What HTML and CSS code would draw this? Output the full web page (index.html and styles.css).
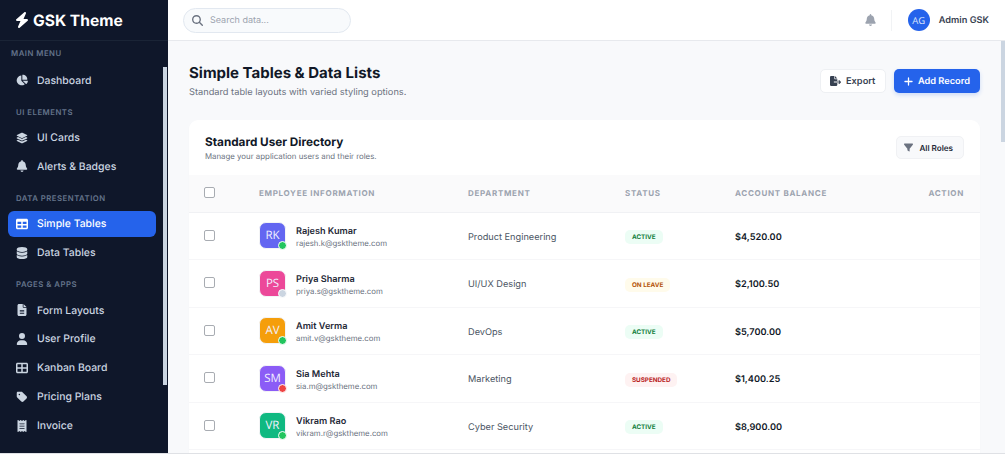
FILE: index.html
```html
<!DOCTYPE html>
<html lang="en">
<head>
<meta charset="utf-8">
<title>GSK Theme</title>
<link rel="stylesheet" href="styles.css">
</head>
<body>
<svg class="sprite" aria-hidden="true">
<symbol id="i-bolt" viewBox="0 0 448 512"><path d="M349.4 44.6c5.9-13.7 1.5-29.7-10.6-38.5s-28.6-8.1-39.9 1.8l-256 224c-10 8.8-13.6 22.9-8.9 35.3S50.7 288 64 288H175.5L98.6 467.4c-5.9 13.7-1.5 29.7 10.6 38.5s28.6 8.1 39.9-1.8l256-224c10-8.8 13.6-22.9 8.9-35.3s-16.6-20.7-30-20.7H272.5L349.4 44.6z"/></symbol>
<symbol id="i-bell" viewBox="0 0 448 512"><path d="M224 0c-17.7 0-32 14.3-32 32V51.2C119 66 64 130.6 64 208v18.8c0 47-17.3 92.4-48.5 127.6l-7.4 8.3c-8.4 9.4-10.4 22.9-5.3 34.4S19.4 416 32 416H416c12.6 0 24-7.4 29.2-18.9s3.1-25-5.3-34.4l-7.4-8.3C401.3 319.2 384 273.9 384 226.8V208c0-77.4-55-142-128-156.8V32c0-17.7-14.3-32-32-32zm45.3 493.3c12-12 18.7-28.3 18.7-45.3H224 160c0 17 6.7 33.3 18.7 45.3s28.3 18.7 45.3 18.7s33.3-6.7 45.3-18.7z"/></symbol>
<symbol id="i-search" viewBox="0 0 512 512"><path d="M416 208c0 45.9-14.9 88.3-40 122.7L502.6 457.4c12.5 12.5 12.5 32.8 0 45.3s-32.8 12.5-45.3 0L330.7 376c-34.4 25.2-76.8 40-122.7 40C93.1 416 0 322.9 0 208S93.1 0 208 0S416 93.1 416 208zM208 352a144 144 0 1 0 0-288 144 144 0 1 0 0 288z"/></symbol>
<symbol id="i-user" viewBox="0 0 448 512"><path d="M224 256A128 128 0 1 0 224 0a128 128 0 1 0 0 256zm-45.7 48C79.8 304 0 383.8 0 482.3C0 498.7 13.3 512 29.7 512H418.3c16.4 0 29.7-13.3 29.7-29.7C448 383.8 368.2 304 269.7 304H178.3z"/></symbol>
<symbol id="i-plus" viewBox="0 0 448 512"><path d="M256 80c0-17.7-14.3-32-32-32s-32 14.3-32 32V224H48c-17.7 0-32 14.3-32 32s14.3 32 32 32H192V432c0 17.7 14.3 32 32 32s32-14.3 32-32V288H400c17.7 0 32-14.3 32-32s-14.3-32-32-32H256V80z"/></symbol>
<symbol id="i-filter" viewBox="0 0 512 512"><path d="M3.9 54.9C10.5 40.9 24.5 32 40 32H472c15.5 0 29.5 8.9 36.1 22.9s4.6 30.5-5.2 42.5L320 320.9V448c0 12.1-6.8 23.2-17.7 28.6s-23.8 4.3-33.5-3l-64-48c-8.1-6-12.8-15.5-12.8-25.6V320.9L9 97.3C-.7 85.4-2.8 68.8 3.9 54.9z"/></symbol>
<symbol id="i-tag" viewBox="0 0 448 512"><path d="M0 80V229.5c0 17 6.7 33.3 18.7 45.3l176 176c25 25 65.5 25 90.5 0L418.7 317.3c25-25 25-65.5 0-90.5l-176-176c-12-12-28.3-18.7-45.3-18.7H48C21.5 32 0 53.5 0 80zm112 32a32 32 0 1 1 0 64 32 32 0 1 1 0-64z"/></symbol>
<symbol id="i-db" viewBox="0 0 448 512"><path d="M448 80v48c0 44.2-100.3 80-224 80S0 172.2 0 128V80C0 35.8 100.3 0 224 0S448 35.8 448 80zM393.2 214.7c20.8-7.4 39.9-16.9 54.8-28.6V288c0 44.2-100.3 80-224 80S0 332.2 0 288V186.1c14.9 11.8 34 21.2 54.8 28.6C99.7 230.7 159.5 240 224 240s124.3-9.3 169.2-25.3zM0 346.1c14.9 11.8 34 21.2 54.8 28.6C99.7 390.7 159.5 400 224 400s124.3-9.3 169.2-25.3c20.8-7.4 39.9-16.9 54.8-28.6V432c0 44.2-100.3 80-224 80S0 476.2 0 432V346.1z"/></symbol>
<symbol id="i-layers" viewBox="0 0 576 512"><path d="M264.5 5.2c14.9-6.9 32.1-6.9 47 0l218.6 101c8.5 3.9 13.9 12.4 13.9 21.8s-5.4 17.9-13.9 21.8l-218.6 101c-14.9 6.9-32.1 6.9-47 0L45.9 149.8C37.4 145.8 32 137.3 32 128s5.4-17.9 13.9-21.8L264.5 5.2zM476.9 209.6l53.2 24.6c8.5 3.9 13.9 12.4 13.9 21.8s-5.4 17.9-13.9 21.8l-218.6 101c-14.9 6.9-32.1 6.9-47 0L45.9 277.8C37.4 273.8 32 265.3 32 256s5.4-17.9 13.9-21.8l53.2-24.6 152 70.2c23.4 10.8 50.4 10.8 73.8 0l152-70.2zm-152 198.2l152-70.2 53.2 24.6c8.5 3.9 13.9 12.4 13.9 21.8s-5.4 17.9-13.9 21.8l-218.6 101c-14.9 6.9-32.1 6.9-47 0L45.9 405.8C37.4 401.8 32 393.3 32 384s5.4-17.9 13.9-21.8l53.2-24.6 152 70.2c23.4 10.8 50.4 10.8 73.8 0z"/></symbol>
<symbol id="i-table" viewBox="0 0 512 512"><path d="M64 256V160H224v96H64zm0 64H224v96H64V320zm224 96V320H448v96H288zM448 256H288V160H448v96zM64 32C28.7 32 0 60.7 0 96V416c0 35.3 28.7 64 64 64H448c35.3 0 64-28.7 64-64V96c0-35.3-28.7-64-64-64H64z"/></symbol>
<symbol id="i-grid" viewBox="0 0 512 512"><path d="M448 96V224H288V96H448zm0 192V416H288V288H448zM224 224H64V96H224V224zM64 288H224V416H64V288zM64 32C28.7 32 0 60.7 0 96V416c0 35.3 28.7 64 64 64H448c35.3 0 64-28.7 64-64V96c0-35.3-28.7-64-64-64H64z"/></symbol>
<symbol id="i-file" viewBox="0 0 384 512"><path d="M64 0C28.7 0 0 28.7 0 64V448c0 35.3 28.7 64 64 64H320c35.3 0 64-28.7 64-64V160H256c-17.7 0-32-14.3-32-32V0H64zM256 0V128H384L256 0zM112 256H272c8.8 0 16 7.2 16 16s-7.2 16-16 16H112c-8.8 0-16-7.2-16-16s7.2-16 16-16zm0 64H272c8.8 0 16 7.2 16 16s-7.2 16-16 16H112c-8.8 0-16-7.2-16-16s7.2-16 16-16zm0 64H272c8.8 0 16 7.2 16 16s-7.2 16-16 16H112c-8.8 0-16-7.2-16-16s7.2-16 16-16z"/></symbol>
<symbol id="i-pie" viewBox="0 0 576 512"><path d="M304 240V16.6c0-9 7-16.6 16-16.6C443.7 0 544 100.3 544 224c0 9-7.6 16-16.6 16H304zM32 272C32 150.7 122.1 50.3 239 34.3c9.2-1.3 17 6.1 17 15.4V288L412.5 444.5c6.7 6.7 6.2 17.7-1.5 23.1C371.8 495.6 323.8 512 272 512C139.5 512 32 404.6 32 272zm526.4 16c9.3 0 16.6 7.8 15.4 17c-7.7 55.9-34.6 105.6-73.9 142.3c-6 5.6-15.4 5.2-21.2-.7L320 288H558.4z"/></symbol>
<symbol id="i-export" viewBox="0 0 576 512"><path d="M0 64C0 28.7 28.7 0 64 0H224V128c0 17.7 14.3 32 32 32H384V288H216c-13.3 0-24 10.7-24 24s10.7 24 24 24H384V448c0 35.3-28.7 64-64 64H64c-35.3 0-64-28.7-64-64V64zM384 336V288H494.1l-39-39c-9.4-9.4-9.4-24.6 0-33.9s24.6-9.4 33.9 0l80 80c9.4 9.4 9.4 24.6 0 33.9l-80 80c-9.4 9.4-24.6 9.4-33.9 0s-9.4-24.6 0-33.9l39-39H384zm0-208H256V0L384 128z"/></symbol>
<symbol id="i-receipt" viewBox="0 0 384 512"><path d="M14 2.2C22.5-1.7 32.5-.3 39.6 5.8L80 40.4 120.4 5.8c9-7.7 22.3-7.7 31.2 0L192 40.4 232.4 5.8c9-7.7 22.2-7.7 31.2 0L304 40.4 344.4 5.8c7.1-6.1 17.1-7.5 25.6-3.6s14 12.4 14 21.8V488c0 9.4-5.5 17.9-14 21.8s-18.5 2.5-25.6-3.6L304 471.6l-40.4 34.6c-9 7.7-22.3 7.7-31.2 0L192 471.6l-40.4 34.6c-9 7.7-22.3 7.7-31.2 0L80 471.6 39.6 506.2c-7.1 6.1-17.1 7.5-25.6 3.6S0 497.4 0 488V24C0 14.6 5.5 6.1 14 2.2zM96 144c-8.8 0-16 7.2-16 16s7.2 16 16 16H288c8.8 0 16-7.2 16-16s-7.2-16-16-16H96zM80 352c0 8.8 7.2 16 16 16H288c8.8 0 16-7.2 16-16s-7.2-16-16-16H96c-8.8 0-16 7.2-16 16zM96 240c-8.8 0-16 7.2-16 16s7.2 16 16 16H288c8.8 0 16-7.2 16-16s-7.2-16-16-16H96z"/></symbol>
</svg>
<div class="app">
  <aside class="sidebar">
    <div class="brand"><svg class="brand-icon"><use href="#i-bolt"/></svg><span>GSK Theme</span></div>
    <nav class="nav">
      <div class="nav-label nav-label-first">MAIN MENU</div>
      <a class="nav-item"><svg class="nav-icon"><use href="#i-pie"/></svg>Dashboard</a>
      <div class="nav-label">UI ELEMENTS</div>
      <a class="nav-item"><svg class="nav-icon"><use href="#i-layers"/></svg>UI Cards</a>
      <a class="nav-item"><svg class="nav-icon"><use href="#i-bell"/></svg>Alerts &amp; Badges</a>
      <div class="nav-label">DATA PRESENTATION</div>
      <a class="nav-item nav-item-active"><svg class="nav-icon"><use href="#i-table"/></svg>Simple Tables</a>
      <a class="nav-item"><svg class="nav-icon"><use href="#i-db"/></svg>Data Tables</a>
      <div class="nav-label">PAGES &amp; APPS</div>
      <a class="nav-item"><svg class="nav-icon"><use href="#i-file"/></svg>Form Layouts</a>
      <a class="nav-item"><svg class="nav-icon"><use href="#i-user"/></svg>User Profile</a>
      <a class="nav-item"><svg class="nav-icon"><use href="#i-grid"/></svg>Kanban Board</a>
      <a class="nav-item"><svg class="nav-icon"><use href="#i-tag"/></svg>Pricing Plans</a>
      <a class="nav-item"><svg class="nav-icon"><use href="#i-receipt"/></svg>Invoice</a>
    </nav>
    <div class="side-thumb"></div>
  </aside>
  <div class="main">
    <header class="topbar">
      <div class="search"><svg class="search-icon"><use href="#i-search"/></svg><span>Search data...</span></div>
      <div class="top-right">
        <svg class="top-bell"><use href="#i-bell"/></svg>
        <div class="top-sep"></div>
        <div class="top-avatar">AG</div>
        <div class="top-name">Admin GSK</div>
      </div>
    </header>
    <main class="content">
      <div class="page-head">
        <div>
          <h1 class="page-title">Simple Tables &amp; Data Lists</h1>
          <p class="page-sub">Standard table layouts with varied styling options.</p>
        </div>
        <div class="page-actions">
          <button class="btn btn-light"><svg class="btn-icon btn-icon-export"><use href="#i-export"/></svg>Export</button>
          <button class="btn btn-primary"><svg class="btn-icon"><use href="#i-plus"/></svg>Add Record</button>
        </div>
      </div>
      <section class="card">
        <div class="card-head">
          <div>
            <h2 class="card-title">Standard User Directory</h2>
            <p class="card-sub">Manage your application users and their roles.</p>
          </div>
          <button class="filter"><svg class="filter-icon"><use href="#i-filter"/></svg>All Roles</button>
        </div>
        <table class="table">
          <thead>
            <tr>
              <th class="col-check"><span class="check"></span></th>
              <th class="col-emp">EMPLOYEE INFORMATION</th>
              <th class="col-dept">DEPARTMENT</th>
              <th class="col-status">STATUS</th>
              <th class="col-bal">ACCOUNT BALANCE</th>
              <th class="col-act">ACTION</th>
            </tr>
          </thead>
          <tbody>
            <tr>
              <td><span class="check"></span></td>
              <td><div class="emp"><div class="avatar av-indigo">RK<i class="dot dot-green"></i></div><div><div class="emp-name">Rajesh Kumar</div><div class="emp-mail">rajesh.k@gsktheme.com</div></div></div></td>
              <td class="dept">Product Engineering</td>
              <td><span class="pill pill-green">ACTIVE</span></td>
              <td class="bal">$4,520.00</td>
              <td></td>
            </tr>
            <tr>
              <td><span class="check"></span></td>
              <td><div class="emp"><div class="avatar av-pink">PS<i class="dot dot-grey"></i></div><div><div class="emp-name">Priya Sharma</div><div class="emp-mail">priya.s@gsktheme.com</div></div></div></td>
              <td class="dept">UI/UX Design</td>
              <td><span class="pill pill-amber">ON LEAVE</span></td>
              <td class="bal">$2,100.50</td>
              <td></td>
            </tr>
            <tr>
              <td><span class="check"></span></td>
              <td><div class="emp"><div class="avatar av-amber">AV<i class="dot dot-green"></i></div><div><div class="emp-name">Amit Verma</div><div class="emp-mail">amit.v@gsktheme.com</div></div></div></td>
              <td class="dept">DevOps</td>
              <td><span class="pill pill-green">ACTIVE</span></td>
              <td class="bal">$5,700.00</td>
              <td></td>
            </tr>
            <tr>
              <td><span class="check"></span></td>
              <td><div class="emp"><div class="avatar av-violet">SM<i class="dot dot-red"></i></div><div><div class="emp-name">Sia Mehta</div><div class="emp-mail">sia.m@gsktheme.com</div></div></div></td>
              <td class="dept">Marketing</td>
              <td><span class="pill pill-red">SUSPENDED</span></td>
              <td class="bal">$1,400.25</td>
              <td></td>
            </tr>
            <tr>
              <td><span class="check"></span></td>
              <td><div class="emp"><div class="avatar av-emerald">VR<i class="dot dot-green"></i></div><div><div class="emp-name">Vikram Rao</div><div class="emp-mail">vikram.r@gsktheme.com</div></div></div></td>
              <td class="dept">Cyber Security</td>
              <td><span class="pill pill-green">ACTIVE</span></td>
              <td class="bal">$8,900.00</td>
              <td></td>
            </tr>
          </tbody>
        </table>
      </section>
    </main>
    <div class="main-thumb"></div>
  </div>
</div>
</body>
</html>
```
FILE: styles.css
```css
* { box-sizing: border-box; }
html, body { margin: 0; height: 100%; overflow: hidden; }
body { font-family: Inter, "Liberation Sans", sans-serif; background: #dfe1e5; color: #111827; text-rendering: geometricPrecision; }
.sprite { position: absolute; width: 0; height: 0; }
svg { fill: currentColor; display: block; }
.app { display: flex; height: 453px; overflow: hidden; }

.sidebar { position: relative; width: 168px; flex: none; background: #0f172a; display: flex; flex-direction: column; }
.brand { height: 41px; flex: none; display: flex; align-items: center; gap: 4px; padding-left: 15px; color: #fff; font-size: 15.6px; font-weight: 700; border-bottom: 1px solid #1a2436; }
.brand-icon { width: 14px; height: 16px; }
.nav { padding: 0 12px 0 8px; }
.nav-label { height: 28.6px; padding: 10px 0 0 8px; font-size: 7.75px; line-height: 12px; font-weight: 600; letter-spacing: 0.5px; color: #64748b; }
.nav-label-first { height: 26px; padding: 6px 0 0 3px; color: #64748b; }
.nav-item { display: flex; align-items: center; height: 26.25px; margin-bottom: 2.6px; padding-left: 8px; border-radius: 6px; color: #cbd5e1; font-size: 10.45px; font-weight: 500; }
.nav-item-active { background: #2563eb; color: #fff; }
.nav-icon { width: 12px; height: 12px; margin-right: 9px; flex: none; }
.side-thumb { position: absolute; left: 163px; top: 67px; width: 4px; height: 318px; background: #cbd5e1; }

.main { position: relative; flex: 1; min-width: 0; background: #f8f9fb; display: flex; flex-direction: column; }
.topbar { height: 41px; flex: none; background: #fff; border-bottom: 1px solid #e7e9ed; display: flex; align-items: center; justify-content: space-between; padding: 0 16px 0 15px; }
.search { width: 168px; height: 25px; display: flex; align-items: center; gap: 7px; padding-left: 8px; border: 1px solid #e2e8f0; border-radius: 13px; background: #f8fafc; font-size: 9px; color: #9ca3af; }
.search-icon { width: 11px; height: 11px; color: #6b7280; }
.top-right { display: flex; align-items: center; }
.top-bell { width: 11px; height: 12px; color: #9ca3af; }
.top-sep { width: 1px; height: 21px; background: #f1f3f5; margin: 0 16px 0 15px; }
.top-avatar { width: 22px; height: 22px; border-radius: 50%; background: #2563eb; color: #dbe6fb; font-family: "Open Sans", sans-serif; font-size: 9.5px; display: flex; align-items: center; justify-content: center; margin-right: 9px; }
.top-name { font-size: 9.2px; font-weight: 600; color: #374151; }

.content { flex: 1; padding: 20px 25px 0 21px; overflow: hidden; }
.page-head { display: flex; justify-content: space-between; align-items: center; height: 39px; margin-bottom: 20px; }
.page-title { margin: 0; font-size: 15px; line-height: 21px; font-weight: 700; color: #111827; }
.page-sub { margin: 3px 0 0; font-size: 9.25px; line-height: 14px; color: #6b7280; }
.page-actions { display: flex; gap: 8px; }
.btn { display: flex; align-items: center; height: 24px; border-radius: 5px; border: 0; font-family: inherit; font-size: 9.25px; font-weight: 600; padding: 1px 10px 0; text-rendering: inherit; }
.btn-light { background: #fff; color: #374151; border: 1px solid #eef0f3; padding: 1px 9.5px 0; }
.btn-primary { background: #2563eb; color: #fff; box-shadow: 0 2px 4px rgba(37, 99, 235, .2); }
.btn-icon { width: 9px; height: 11px; margin-right: 5px; }
.btn-icon-export { width: 11px; height: 10px; }

.card { background: #fff; border-radius: 9px; box-shadow: 0 1px 3px rgba(0, 0, 0, .02); min-height: 400px; }
.card-head { height: 55px; display: flex; align-items: center; justify-content: space-between; padding: 0 16px; }
.card-title { margin: 0; font-size: 11.75px; line-height: 16px; font-weight: 700; color: #111827; }
.card-sub { margin: 1px 0 0; font-size: 7.85px; line-height: 11px; color: #6b7280; }
.filter { display: flex; align-items: center; gap: 6px; height: 23px; padding: 0 10px 0 7px; background: #f8f9fb; border: 1px solid #f0f1f4; border-radius: 5px; font-family: inherit; font-size: 8.1px; font-weight: 600; color: #1f2937; text-rendering: inherit; }
.filter-icon { width: 9px; height: 9px; color: #6b7280; }

.table { width: 100%; border-collapse: collapse; table-layout: fixed; }
.table th { height: 37px; background: #fafafb; border-bottom: 1px solid #f0f1f4; text-align: left; font-size: 8px; font-weight: 700; letter-spacing: .7px; color: #9ca3af; padding: 0; }
.table td { height: 47.5px; border-bottom: 1px solid #f6f6f8; padding: 3px 0 0; font-size: 9.2px; }
.col-check { width: 70px; padding-left: 15px !important; }
.col-emp { width: 209px; }
.col-dept { width: 157px; }
.col-status { width: 110px; }
.col-bal { width: auto; }
.col-act { width: 60px; text-align: right !important; padding-right: 16px !important; }
.table td:first-child { padding-left: 15px; padding-top: 0; }
.check { display: block; width: 11px; height: 11px; border: 1.25px solid #a8acb2; border-radius: 2px; background: #fff; margin-top: -1px; }
.emp { display: flex; align-items: center; gap: 10px; margin-top: -3px; }
.avatar { position: relative; width: 27px; height: 27px; border-radius: 7px; border: 1px solid #f3f4f6; color: #f1f1ff; font-family: "Open Sans", sans-serif; font-size: 11.5px; display: flex; align-items: center; justify-content: center; }
.av-indigo { background: #6366f1; }
.av-pink { background: #ec4899; }
.av-amber { background: #f59e0b; }
.av-violet { background: #8b5cf6; }
.av-emerald { background: #10b981; }
.dot { position: absolute; right: -2px; bottom: -2px; width: 9px; height: 9px; border-radius: 50%; border: 1.5px solid #fff; box-sizing: border-box; }
.dot-green { background: #22c55e; }
.dot-grey { background: #cbd5e1; }
.dot-red { background: #ef4444; }
.emp-name { margin-top: 4px; font-size: 9.15px; line-height: 12px; font-weight: 600; color: #1f2937; }
.emp-mail { font-size: 7.8px; line-height: 11px; color: #6b7280; }
.dept { color: #4b5563; }
.bal { font-weight: 600; color: #111827; }
.pill { display: inline-block; height: 14px; line-height: 14px; padding: 0 7px; border-radius: 5px; font-size: 6.3px; font-weight: 700; }
.pill-green { background: #ecfdf5; color: #15803d; }
.pill-amber { background: #fffbeb; color: #b45309; }
.pill-red { background: #fef2f2; color: #b91c1c; }
.main-thumb { position: absolute; right: 0; top: 41px; width: 4px; height: 101px; background: #cbd5e1; }
```
